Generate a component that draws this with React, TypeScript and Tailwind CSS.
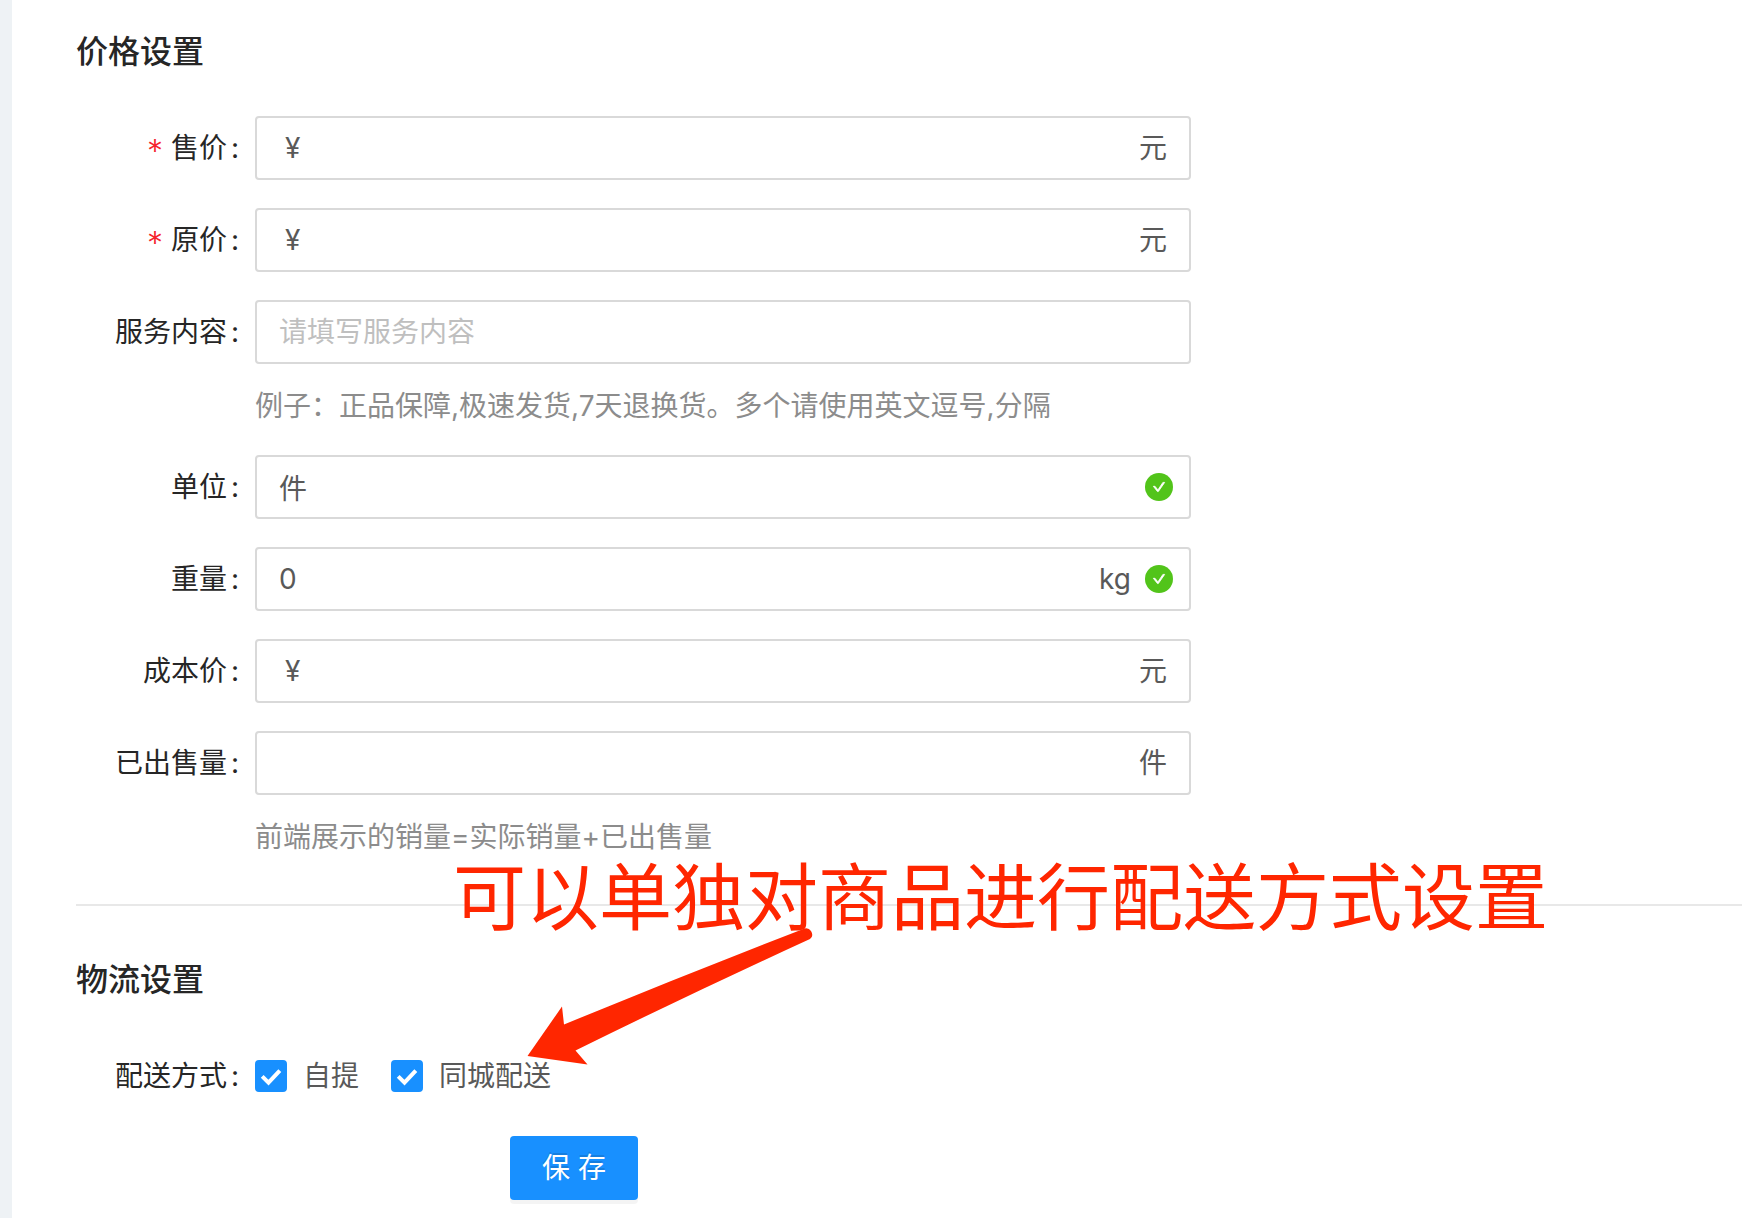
type FieldProps = {
  id: string;
  label: string;
  required?: boolean;
  prefix?: string;
  suffix?: string;
  placeholder?: string;
  value?: string;
  valid?: boolean;
  help?: string;
};

const labelClass =
  "flex h-16 w-[179px] shrink-0 items-center justify-end pr-4 whitespace-nowrap text-[#262626]";

function ValidIcon() {
  return (
    <svg viewBox="0 0 28 28" className="size-7" aria-hidden="true">
      <circle cx="14" cy="14" r="14" fill="#52c41a" />
      <path
        d="M8.300 13.300H10L12.900 16.900L17.900 9.400H19.700L13.300 18.600H12.500Z"
        fill="#fff"
        stroke="#fff"
        strokeWidth="0.8"
        strokeLinejoin="round"
      />
    </svg>
  );
}

function Field({ id, label, required, prefix, suffix, placeholder, value, valid, help }: FieldProps) {
  return (
    <div className="flex">
      <label htmlFor={id} className={labelClass}>
        {required && <span className="mr-2 pt-2 text-[32px] font-light text-[#f5222d]">*</span>}
        {label}
        <span className="ml-1">:</span>
      </label>
      <div className="min-w-0 flex-1">
        <div className="flex h-16 items-center rounded border-2 border-[#d9d9d9] bg-white pl-[22px]">
          {prefix && <span className="px-1.5">{prefix}</span>}
          <input
            id={id}
            type="text"
            defaultValue={value}
            placeholder={placeholder}
            className="h-full min-w-0 flex-1 bg-transparent outline-none placeholder:text-[#bfbfbf]"
          />
          {suffix && <span className={valid ? "mr-3.5" : "mr-[22px]"}>{suffix}</span>}
          {valid && (
            <span className="mr-4">
              <ValidIcon />
            </span>
          )}
        </div>
        {help && <p className="h-[63px] pt-[21px] leading-[42px] text-[#8c8c8c]">{help}</p>}
      </div>
    </div>
  );
}

function Check({ label }: { label: string }) {
  return (
    <label className="flex items-center">
      <span className="relative size-8">
        <input
          type="checkbox"
          defaultChecked
          className="peer block size-8 appearance-none rounded border-2 border-[#d9d9d9] bg-white checked:border-[#1890ff] checked:bg-[#1890ff]"
        />
        <svg
          viewBox="0 0 32 32"
          className="pointer-events-none absolute inset-0 hidden size-8 peer-checked:block"
          aria-hidden="true"
        >
          <path d="M7.2 16.4l6.3 6.3L24.8 10.6" fill="none" stroke="#fff" strokeWidth="4" />
        </svg>
      </span>
      <span className="px-4">{label}</span>
    </label>
  );
}

function Note() {
  return (
    <div className="pointer-events-none absolute top-[-56px] left-[377px] text-[#ff2600]">
      <p className="text-[73px] leading-[96px] font-normal whitespace-nowrap">可以单独对商品进行配送方式设置</p>
      <svg viewBox="0 0 288 140" className="absolute top-[76px] left-[74px] w-[288px]" aria-hidden="true">
        <path
          d="M0.500 130L35 80.500L37 98.500Q155 50 275 3.500Q281 0.500 284 5Q287 10 283 13Q165 67 48.500 124.500L60.500 138.500Z"
          fill="currentColor"
        />
      </svg>
    </div>
  );
}

export default function App() {
  return (
    <div className="min-h-screen overflow-hidden border-l-12 border-[#eef2f5] bg-white pt-7 pl-16 font-['Inter','Noto_Sans_CJK_SC',sans-serif] text-[28px] leading-[42px] text-[#595959]">
      <form>
        <section>
          <h2 className="mb-10 text-[32px] leading-[48px] font-medium text-[#262626]">价格设置</h2>
          <div className="flex max-w-[1115px] flex-col gap-7">
            <Field id="price" label="售价" required prefix="¥" suffix="元" />
            <Field id="original" label="原价" required prefix="¥" suffix="元" />
            <Field
              id="service"
              label="服务内容"
              placeholder="请填写服务内容"
              help="例子：正品保障,极速发货,7天退换货。多个请使用英文逗号,分隔"
            />
            <Field id="unit" label="单位" value="件" valid />
            <Field id="weight" label="重量" value="0" suffix="kg" valid />
            <Field id="cost" label="成本价" prefix="¥" suffix="元" />
            <Field id="sold" label="已出售量" suffix="件" help="前端展示的销量=实际销量+已出售量" />
          </div>
        </section>
        <section className="relative mt-[46px] border-t-2 border-[#e8e8e8] pt-[50px]">
          <h2 className="mb-10 text-[32px] leading-[48px] font-medium text-[#262626]">物流设置</h2>
          <div className="flex h-16" role="group" aria-labelledby="delivery">
            <span id="delivery" className={labelClass}>
              配送方式
              <span className="ml-1">:</span>
            </span>
            <div className="flex items-center gap-4">
              <Check label="自提" />
              <Check label="同城配送" />
            </div>
          </div>
          <Note />
        </section>
        <button
          type="button"
          className="mt-7 ml-[434px] flex h-16 w-32 items-center justify-center rounded bg-[#1890ff] text-white shadow-[0_4px_0_rgba(0,0,0,0.045)] [text-shadow:0_-2px_0_rgba(0,0,0,0.12)]"
        >
          保 存
        </button>
      </form>
    </div>
  );
}
